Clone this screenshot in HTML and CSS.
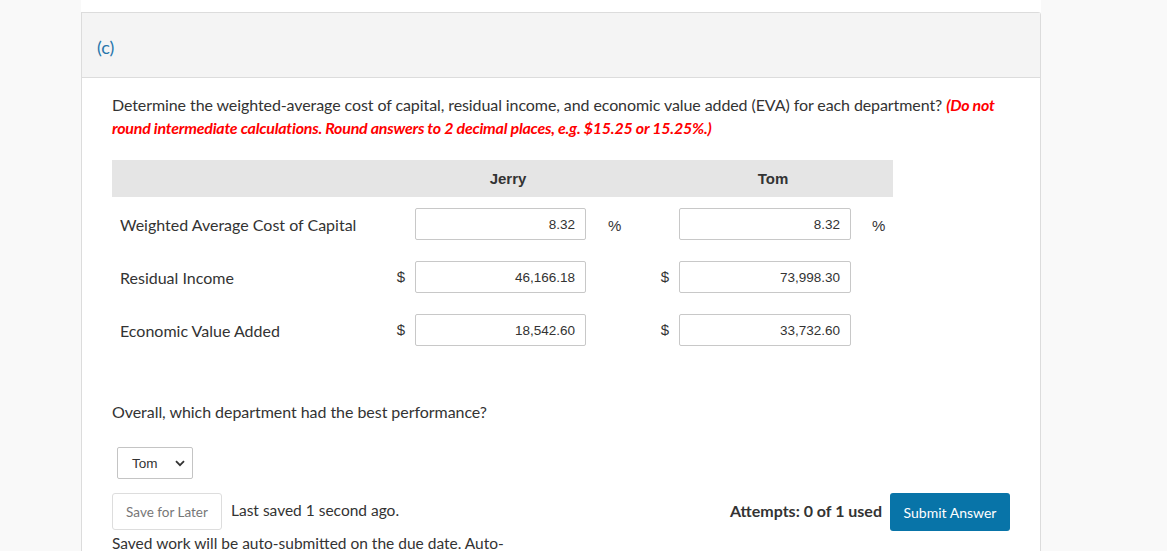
FILE: index.html
```html
<!DOCTYPE html>
<html>
<head>
<meta charset="utf-8">
<link rel="stylesheet" href="styles.css">
</head>
<body>
<div class="page">
  <div class="side left"></div>
  <div class="main">
    <div class="card">
      <div class="card-head"><span class="part">(c)</span></div>
      <div class="card-body">
        <p class="instr">Determine the weighted-average cost of capital, residual income, and economic value added (EVA) for each department? <em class="red">(Do not round intermediate calculations. Round answers to 2 decimal places, e.g. $15.25 or 15.25%.)</em></p>
        <div class="grid">
          <div class="hblank"></div>
          <div class="hcell">Jerry</div>
          <div class="hcell">Tom</div>

          <div class="lbl">Weighted Average Cost of Capital</div>
          <div class="sym"></div>
          <div class="inp">8.32</div>
          <div class="pct">%</div>
          <div class="sym"></div>
          <div class="inp">8.32</div>
          <div class="pct p2">%</div>

          <div class="lbl">Residual Income</div>
          <div class="sym">$</div>
          <div class="inp">46,166.18</div>
          <div class="pct"></div>
          <div class="sym">$</div>
          <div class="inp">73,998.30</div>
          <div class="pct p2"></div>

          <div class="lbl">Economic Value Added</div>
          <div class="sym">$</div>
          <div class="inp">18,542.60</div>
          <div class="pct"></div>
          <div class="sym">$</div>
          <div class="inp">33,732.60</div>
          <div class="pct p2"></div>
        </div>
        <p class="question">Overall, which department had the best performance?</p>
        <div class="select">Tom<svg class="chev" width="10" height="7" viewBox="0 0 10 7"><path d="M1 1.2 L5 5.2 L9 1.2" fill="none" stroke="#333" stroke-width="1.8"/></svg></div>
        <div class="footer">
          <div class="fleft">
            <div class="saverow"><span class="savebtn">Save for Later</span><span class="saved">Last saved 1 second ago.</span></div>
            <div class="autosub">Saved work will be auto-submitted on the due date. Auto-</div>
          </div>
          <div class="fright">
            <span class="attempts">Attempts: 0 of 1 used</span>
            <span class="submit">Submit Answer</span>
          </div>
        </div>
      </div>
    </div>
  </div>
  <div class="side right"></div>
</div>
</body>
</html>
```
FILE: styles.css
```css
html, body {
  margin: 0;
  padding: 0;
  height: 100%;
  overflow: hidden;
}
body {
  font-family: Lato, "Open Sans", sans-serif;
  color: #333;
  background: #fafafa;
}
.page {
  display: flex;
  height: 551px;
}
.side {
  background: #f9f9f9;
}
.left { width: 81px; }
.right { flex: 1; }
.main {
  width: 960px;
  background: #fff;
  padding-top: 12px;
  box-sizing: border-box;
}
.card {
  border: 1px solid #dcdcdc;
  border-bottom: none;
  border-radius: 0 3px 0 0;
  height: 600px;
}
.card-head {
  height: 65px;
  background: #f4f4f4;
  border-bottom: 1px solid #dcdcdc;
  padding-left: 15px;
  box-sizing: border-box;
  padding-top: 23px;
}
.part {
  color: #2776ab;
  font-size: 18px;
}
.card-body {
  padding: 15px 30px 0 30px;
}
.instr {
  margin: 0;
  font-size: 16px;
  line-height: 23px;
  color: #333;
  width: 900px;
  letter-spacing: -0.09px;
}
.red {
  color: #f00;
  font-weight: bold;
  font-style: italic;
  letter-spacing: -0.24px;
}
.grid {
  margin-top: 21px;
  display: grid;
  grid-template-columns: 251px 52px 171px 67px 26px 172px 42px;
  grid-auto-rows: auto;
  width: 781px;
}
.hblank, .hcell {
  background: #e5e5e5;
  height: 37px;
}
.hcell {
  grid-column: span 3;
  display: flex;
  align-items: center;
  justify-content: center;
  font-family: "Liberation Sans", Arial, sans-serif;
  font-weight: bold;
  font-size: 15px;
  color: #333;
}
.lbl {
  font-size: 16px;
  padding-left: 8px;
  display: flex;
  align-items: center;
  height: 32px;
  margin: 11px 0 10px;
  box-sizing: border-box;
}
.sym, .pct {
  font-family: "Liberation Sans", Arial, sans-serif;
  font-size: 15px;
  display: flex;
  align-items: center;
  height: 32px;
  margin: 11px 0 10px;
}
.sym {
  justify-content: flex-end;
  padding-right: 10px;
  padding-bottom: 2px;
  box-sizing: border-box;
}
.pct {
  padding-left: 22px;
  padding-top: 2px;
  box-sizing: border-box;
}
.p2 { padding-left: 21px; }
.inp {
  height: 32px;
  margin: 11px 0 10px;
  border: 1px solid #c8c8c8;
  border-radius: 2px;
  box-sizing: border-box;
  display: flex;
  align-items: center;
  justify-content: flex-end;
  padding-right: 10px;
  padding-top: 1px;
  font-family: "Liberation Sans", Arial, sans-serif;
  font-size: 13.5px;
  color: #333;
}
.question {
  margin: 45px 0 0 0;
  font-size: 16px;
  line-height: 22px;
  letter-spacing: -0.05px;
}
.select {
  margin: 24px 0 0 5px;
  width: 76px;
  height: 32px;
  border: 1px solid #c4c4c4;
  border-radius: 2px;
  box-sizing: border-box;
  display: flex;
  align-items: center;
  justify-content: space-between;
  padding: 0 7px 0 14px;
  font-family: "Liberation Sans", Arial, sans-serif;
  font-size: 13.5px;
}
.footer {
  display: flex;
  justify-content: space-between;
  margin-top: 14px;
  width: 898px;
}
.saverow {
  display: flex;
  align-items: center;
}
.savebtn {
  border: 1px solid #ddd;
  border-radius: 3px;
  height: 37px;
  width: 110px;
  box-sizing: border-box;
  display: flex;
  align-items: center;
  justify-content: center;
  font-size: 13.5px;
  color: #777;
}
.saved {
  margin-left: 9px;
  font-size: 15.5px;
  padding-bottom: 3px;
}
.autosub {
  font-size: 15.5px;
  margin-top: 4px;
}
.fright {
  display: flex;
  align-items: flex-start;
}
.attempts {
  font-weight: bold;
  font-size: 16px;
  margin-top: 8px;
  margin-right: 8px;
}
.submit {
  background: #0874a8;
  color: #fff;
  border-radius: 3px;
  height: 38px;
  width: 120px;
  display: flex;
  align-items: center;
  justify-content: center;
  font-size: 14px;
}
```
